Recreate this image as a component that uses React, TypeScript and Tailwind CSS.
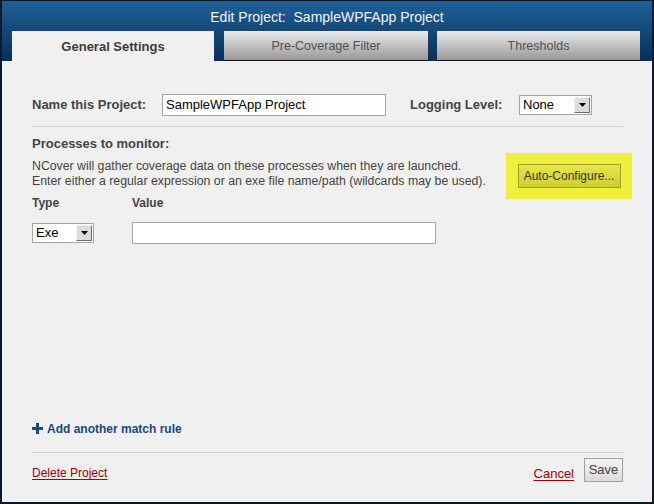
import React from "react";

const font = "font-['Liberation_Sans',Arial,sans-serif]";

type SelectProps = { value: string; className?: string };

const FakeSelect = ({ value, className = "" }: SelectProps) => (
	<div className={`flex h-[20px] items-stretch border border-[#a5a5a5] bg-white font-normal ${className}`}>
		<span className="flex-1 pl-[3px] text-[13px] leading-[18px] text-black">{value}</span>
		<span className="m-[1px] flex w-[16px] items-center justify-center border border-t-[#f4f4f4] border-l-[#f4f4f4] border-r-[#707070] border-b-[#707070] bg-[#dcdcdc]">
			<svg width="7" height="4" viewBox="0 0 7 4">
				<path d="M0 0h7L3.5 4z" fill="#000" />
			</svg>
		</span>
	</div>
);

const tabs = [
	{ label: "General Settings", active: true, w: "w-[202px]" },
	{ label: "Pre-Coverage Filter", active: false, w: "w-[204px]" },
	{ label: "Thresholds", active: false, w: "w-[203px]" },
];

export default function App() {
	return (
		<div className={`${font} flex h-[504px] w-[654px] flex-col border-x-2 border-b-2 border-t border-x-[#0b1a2c] border-b-[#0b1a2c] border-t-[#0b1a2c] bg-[#f0f0f0]`}>
			<header className="flex h-[60px] flex-col bg-gradient-to-b from-[#1f6198] to-[#08305a]">
				<h1 className="pt-[8px] text-center text-[14px] leading-[17px] text-[#f2f5f8]">
					Edit Project:&nbsp; SampleWPFApp Project
				</h1>
				<nav className="mt-[5px] flex gap-[10px] pl-[10px]">
					{tabs.map((t, i) => (
						<div
							key={t.label}
							className={`${t.w} ${i === 2 ? "ml-[-1px]" : ""} flex h-[30px] items-center justify-center pt-[2px] ${
								t.active
									? "bg-[#f0f0f0] text-[13px] font-bold text-[#3c3c3c]"
									: "border-b border-[#111] bg-gradient-to-b from-[#ececec] to-[#999999] text-[12.5px] text-[#505050]"
							}`}
						>
							{t.label}
						</div>
					))}
				</nav>
			</header>

			<main className="flex flex-1 flex-col pl-[30px] pr-[29px]">
				<div className="mt-[33px] flex items-center text-[13px] font-bold text-[#444]">
					<label className="w-[130px]">Name this Project:</label>
					<div className="h-[22px] w-[224px] border border-[#a5a5a5] bg-white pl-[3px] text-[13px] font-normal leading-[20px] text-black">
						SampleWPFApp Project
					</div>
					<label className="ml-[24px] w-[109px]">Logging Level:</label>
					<FakeSelect value="None" className="w-[73px]" />
				</div>

				<hr className="mt-[10px] border-t border-[#d4d4d4]" />

				<h2 className="mt-[9px] text-[13px] font-bold leading-[15px] text-[#444]">Processes to monitor:</h2>

				<div className="mt-[2px] flex items-start">
					<p className="mt-[6px] flex-1 text-[12.3px] leading-[15px] text-[#444]">
						NCover will gather coverage data on these processes when they are launched.
						<br />
						Enter either a regular expression or an exe file name/path (wildcards may be used).
					</p>
					<div className="mr-[-9px] flex h-[46px] w-[126px] items-center justify-center bg-[#f0f03c]">
						<button className="h-[24px] w-[103px] border border-[#a0a020] bg-gradient-to-b from-[#e6e64a] to-[#cfcf2e] text-[12px] text-[#333]">
							Auto-Configure...
						</button>
					</div>
				</div>

				<div className="mt-[-5px] flex text-[12px] font-bold text-[#444]">
					<span className="w-[100px]">Type</span>
					<span>Value</span>
				</div>

				<div className="mt-[10px] flex items-center">
					<FakeSelect value="Exe" className="w-[62px]" />
					<div className="ml-[38px] h-[22px] w-[304px] border border-[#a5a5a5] bg-white" />
				</div>

				<div className="flex-1" />

				<button className="flex items-center gap-[4px] text-[12px] font-bold text-[#184a7c]">
					<svg width="11" height="11" viewBox="0 0 11 11">
						<path d="M4 0h3v4h4v3H7v4H4V7H0V4h4z" fill="#184a7c" />
					</svg>
					Add another match rule
				</button>

				<hr className="mt-[14px] border-t border-[#d0d0d0]" />

				<footer className="mb-[19px] mt-[4px] flex items-center">
					<a className="mt-[7px] flex-1 text-[12px] text-[#a00000] underline underline-offset-2">Delete Project</a>
					<a className="mt-[7px] text-[13px] text-[#a00000] underline underline-offset-2">Cancel</a>
					<button className="ml-[10px] h-[24px] w-[39px] border border-[#a0a0a0] bg-gradient-to-b from-[#f4f4f4] to-[#dcdcdc] text-[13px] text-[#444]">
						Save
					</button>
				</footer>
			</main>
		</div>
	);
}
